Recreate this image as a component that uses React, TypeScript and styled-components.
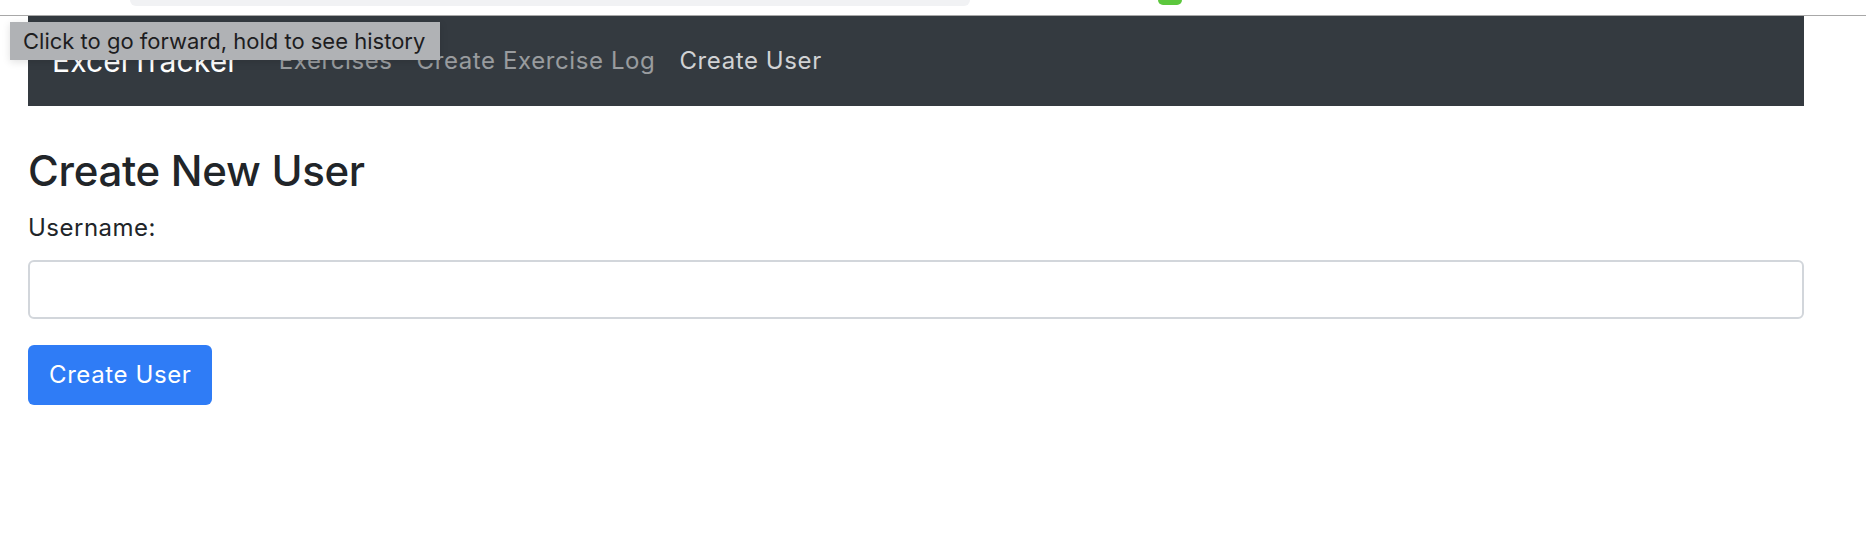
import React from "react";
import styled, { createGlobalStyle } from "styled-components";

const GlobalStyle = createGlobalStyle`
  * { box-sizing: border-box; }
  html, body { margin: 0; padding: 0; background: #ffffff; }
  body {
    font-family: Inter, "Noto Sans", "Liberation Sans", sans-serif;
    color: #212529;
    width: 1866px;
    height: 542px;
    overflow: hidden;
  }
`;

const Page = styled.div`
  position: relative;
  width: 1866px;
  height: 542px;
  background: #ffffff;
`;

const Chrome = styled.div`
  height: 16px;
  border-bottom: 1px solid #a8a8a8;
  display: flex;
  align-items: flex-start;
  padding-left: 130px;
`;

const AddressPill = styled.div`
  width: 840px;
  height: 6px;
  background: #f1f2f4;
  border-radius: 0 0 14px 14px;
`;

const Badge = styled.div`
  margin-left: 188px;
  width: 24px;
  height: 5px;
  background: #5cc73d;
  border-radius: 0 0 5px 5px;
`;

const Container = styled.div`
  width: 1776px;
  margin-left: 28px;
`;

const Navbar = styled.nav`
  height: 90px;
  background: #343a40;
  display: flex;
  align-items: center;
  padding: 0 24px;
`;

const Brand = styled.a`
  color: #ffffff;
  font-size: 30px;
  line-height: 45px;
  margin-right: 28px;
  text-decoration: none;
  letter-spacing: 0.1px;
`;

const NavList = styled.div`
  display: flex;
  align-items: center;
`;

const NavLink = styled.a<{ $active?: boolean }>`
  color: ${(p) => (p.$active ? "rgba(255,255,255,0.78)" : "rgba(255,255,255,0.5)")};
  font-size: 24px;
  line-height: 36px;
  padding: 0 12px;
  letter-spacing: 0.6px;
  text-decoration: none;
`;

const Content = styled.div`
  padding-top: 40px;
`;

const Heading = styled.h3`
  margin: 0 0 14px 0;
  font-size: 42px;
  font-weight: 500;
  line-height: 1.2;
  letter-spacing: -0.3px;
`;

const FormGroup = styled.div`
  margin-bottom: 26px;
`;

const Label = styled.label`
  display: block;
  font-size: 24px;
  line-height: 36px;
  letter-spacing: 0.5px;
  margin-bottom: 14px;
`;

const Input = styled.input`
  display: block;
  width: 100%;
  height: 59px;
  border: 2px solid #d2d6db;
  border-radius: 6px;
  padding: 9px 18px;
  font-size: 24px;
  font-family: inherit;
  background: #ffffff;
  outline: none;
`;

const Button = styled.button`
  height: 60px;
  padding: 0 21px;
  background: #2f7cf6;
  color: #ffffff;
  border: none;
  border-radius: 6px;
  font-family: inherit;
  font-size: 24px;
  line-height: 36px;
  letter-spacing: 0.6px;
  cursor: pointer;
`;

const Tooltip = styled.div`
  position: absolute;
  left: 10px;
  top: 22px;
  width: 430px;
  height: 38px;
  background: #b0b2b5;
  color: #1d1d1f;
  font-size: 22px;
  line-height: 38px;
  padding-left: 13px;
  box-shadow: 0 2px 8px rgba(0, 0, 0, 0.12);
  white-space: nowrap;
`;

export default function App() {
  return (
    <>
      <GlobalStyle />
      <Page>
        <Chrome>
          <AddressPill />
          <Badge />
        </Chrome>
        <Container>
          <Navbar>
            <Brand href="#">ExcerTracker</Brand>
            <NavList>
              <NavLink href="#">Exercises</NavLink>
              <NavLink href="#">Create Exercise Log</NavLink>
              <NavLink href="#" $active>
                Create User
              </NavLink>
            </NavList>
          </Navbar>
          <Content>
            <Heading>Create New User</Heading>
            <form onSubmit={(e) => e.preventDefault()}>
              <FormGroup>
                <Label>Username:</Label>
                <Input type="text" />
              </FormGroup>
              <Button type="submit">Create User</Button>
            </form>
          </Content>
        </Container>
        <Tooltip>Click to go forward, hold to see history</Tooltip>
      </Page>
    </>
  );
}
